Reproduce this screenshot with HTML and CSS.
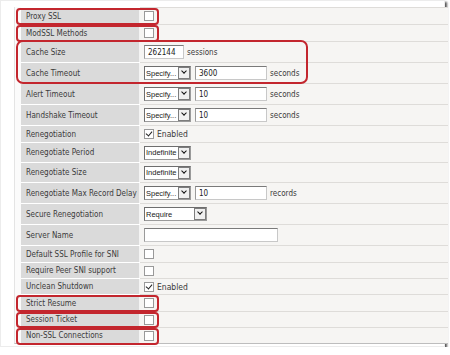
FILE: index.html
```html
<!DOCTYPE html>
<html lang="en">
<head>
    <meta charset="UTF-8">
    <title>SSL Profile</title>
    <link rel="stylesheet" href="styles.css">
</head>
<body>
<div class="frame">
  <div class="props">
    <div class="row r17"><div class="lbl">Proxy SSL</div><div class="val"><span class="chk"></span></div></div>
    <div class="row r17"><div class="lbl">ModSSL Methods</div><div class="val"><span class="chk"></span></div></div>
    <div class="row r21"><div class="lbl">Cache Size</div><div class="val"><span class="inp w-size">262144</span><span class="unit">sessions</span></div></div>
    <div class="row r21"><div class="lbl">Cache Timeout</div><div class="val"><span class="sel"><span class="sel-text">Specify...</span><span class="sel-btn"></span></span><span class="inp w-num">3600</span><span class="unit">seconds</span></div></div>
    <div class="row r21"><div class="lbl">Alert Timeout</div><div class="val"><span class="sel"><span class="sel-text">Specify...</span><span class="sel-btn"></span></span><span class="inp w-num">10</span><span class="unit">seconds</span></div></div>
    <div class="row r21"><div class="lbl">Handshake Timeout</div><div class="val"><span class="sel"><span class="sel-text">Specify...</span><span class="sel-btn"></span></span><span class="inp w-num">10</span><span class="unit">seconds</span></div></div>
    <div class="row r17"><div class="lbl">Renegotiation</div><div class="val"><span class="chk on"></span><span class="en">Enabled</span></div></div>
    <div class="row r20"><div class="lbl">Renegotiate Period</div><div class="val"><span class="sel"><span class="sel-text">Indefinite</span><span class="sel-btn"></span></span></div></div>
    <div class="row r20"><div class="lbl">Renegotiate Size</div><div class="val"><span class="sel"><span class="sel-text">Indefinite</span><span class="sel-btn"></span></span></div></div>
    <div class="row r21"><div class="lbl">Renegotiate Max Record Delay</div><div class="val"><span class="sel"><span class="sel-text">Specify...</span><span class="sel-btn"></span></span><span class="inp w-num">10</span><span class="unit">records</span></div></div>
    <div class="row r21"><div class="lbl">Secure Renegotiation</div><div class="val"><span class="sel wide"><span class="sel-text">Require</span><span class="sel-btn"></span></span></div></div>
    <div class="row r21"><div class="lbl">Server Name</div><div class="val"><span class="inp w-name"></span></div></div>
    <div class="row r17"><div class="lbl">Default SSL Profile for SNI</div><div class="val"><span class="chk"></span></div></div>
    <div class="row r16"><div class="lbl">Require Peer SNI support</div><div class="val"><span class="chk"></span></div></div>
    <div class="row r16"><div class="lbl">Unclean Shutdown</div><div class="val"><span class="chk on"></span><span class="en">Enabled</span></div></div>
    <div class="row r17"><div class="lbl">Strict Resume</div><div class="val"><span class="chk"></span></div></div>
    <div class="row r16"><div class="lbl">Session Ticket</div><div class="val"><span class="chk"></span></div></div>
    <div class="row r16"><div class="lbl">Non-SSL Connections</div><div class="val"><span class="chk"></span></div></div>
  </div>

  <!-- red highlight boxes -->
  <div class="mark m-proxy"></div>
  <div class="mark m-modssl"></div>
  <div class="mark m-cache"></div>
  <div class="mark m-strict"></div>
  <div class="mark m-ticket"></div>
  <div class="mark m-nonssl"></div>
</div>
</body>
</html>
```

FILE: styles.css
```css
body {
    margin: 0;
    background: #fff;
    font-family: "DejaVu Sans Condensed", "Liberation Sans", Arial, sans-serif;
    font-size: 8px;
    color: #3a3a3a;
}

.frame {
    position: relative;
    box-sizing: border-box;
    width: 445px;
    height: 347px;
    padding: 6px 0 0 13px;
    background: #fff;
    border: 1px solid #ececec;
    box-shadow: 2px 2px 2px #555;
}

.props {
    width: 427px;
    border-left: 1px solid #e4e4e4;
    border-bottom: 1px solid #bdbdbd;
    padding-left: 6px;
    background: #fbfbfb;
}

.row {
    display: flex;
    box-sizing: border-box;
    border-top: 1px solid #fff;
}

.r16 { height: 16px; }
.r17 { height: 17px; }
.r20 { height: 20px; }
.r21 { height: 21px; }

.lbl {
    width: 113px;
    padding-left: 5px;
    display: flex;
    align-items: center;
    background: #dadada;
    border-right: 1px solid #f4f4f4;
    white-space: nowrap;
}

.val {
    flex: 1;
    display: flex;
    align-items: center;
    padding-left: 4px;
    background: #f6f5f3;
    border-top: 1px solid #dedcd9;
    margin-top: -1px;
}

.chk {
    box-sizing: border-box;
    width: 10px;
    height: 10px;
    border: 1px solid #999;
    background: #fff;
    position: relative;
}

.chk.on::after {
    content: "";
    position: absolute;
    left: 2px;
    top: 0;
    width: 3px;
    height: 5px;
    border: solid #222;
    border-width: 0 1.5px 1.5px 0;
    transform: rotate(40deg);
}

.en {
    margin-left: 3px;
    font-size: 8.5px;
}

.inp {
    box-sizing: border-box;
    height: 14px;
    padding: 1px 3px 0;
    display: flex;
    align-items: center;
    background: #fff;
    border: 1px solid #c8c8c8;
    border-top-color: #7a7a7a;
    border-left-color: #9a9a9a;
    color: #222;
}

.w-size { width: 40px; }
.w-num { width: 72px; margin-left: 4px; }
.w-name { width: 134px; }

.unit {
    margin-left: 3px;
}

.sel {
    box-sizing: border-box;
    width: 47px;
    height: 14px;
    display: flex;
    align-items: center;
    background: #fff;
    border: 1px solid #9a9a9a;
    border-top-color: #6e6e6e;
    border-left-color: #6e6e6e;
    color: #222;
}

.sel.wide { width: 63px; }

.sel-text {
    flex: 1;
    padding-left: 1px;
    overflow: hidden;
    white-space: nowrap;
    font-family: "Liberation Sans", Arial, sans-serif;
    font-size: 7.5px;
}

.sel-btn {
    position: relative;
    box-sizing: border-box;
    width: 12px;
    height: 12px;
    background: #f0f0f0;
    border: 1px solid #7d7d7d;
}

.sel-btn::after {
    content: "";
    position: absolute;
    left: 3px;
    top: 1px;
    width: 3px;
    height: 3px;
    border: solid #111;
    border-width: 0 1.5px 1.5px 0;
    transform: rotate(45deg);
}

.mark {
    position: absolute;
    box-sizing: border-box;
    border: 2px solid #c3262e;
    border-radius: 4px;
}

.m-proxy  { left: 15px; top: 7px;   width: 143px; height: 17px; }
.m-modssl { left: 15px; top: 24px;  width: 143px; height: 17px; }
.m-cache  { left: 15px; top: 39px;  width: 292px; height: 44px; border-radius: 7px; }
.m-strict { left: 15px; top: 294px; width: 143px; height: 17px; }
.m-ticket { left: 15px; top: 311px; width: 143px; height: 16px; }
.m-nonssl { left: 15px; top: 327px; width: 143px; height: 17px; }
```
